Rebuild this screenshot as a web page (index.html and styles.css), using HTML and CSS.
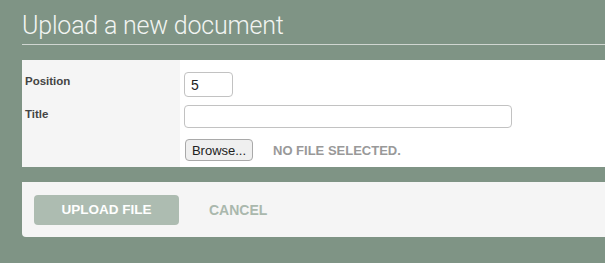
FILE: index.html
```html
<!DOCTYPE html>
<html lang="en">
<head>
    <meta charset="UTF-8">
    <title>Upload a new document</title>
    <link rel="stylesheet" href="styles.css">
</head>
<body>
    <div class="page">
        <h1>Upload a new document</h1>

        <form class="upload-form">
            <div class="fields">
                <div class="labels">
                    <label class="label">Position</label>
                    <label class="label">Title</label>
                </div>
                <div class="inputs">
                    <input type="text" class="input-position" value="5">
                    <input type="text" class="input-title">
                    <div class="file-row">
                        <button type="button" class="browse">Browse...</button>
                        <span class="file-name">No file selected.</span>
                    </div>
                </div>
            </div>

            <div class="actions">
                <button type="button" class="btn-upload">Upload file</button>
                <a class="cancel">Cancel</a>
            </div>
        </form>
    </div>
</body>
</html>
```

FILE: styles.css
```css
body {
    margin: 0;
    background: #7f9485;
    font-family: "Liberation Sans", Arial, sans-serif;
    overflow: hidden;
}
.page {
    padding: 11px 0 0 22px;
}
h1 {
    margin: 0;
    padding: 0 0 4px 0;
    font-family: Roboto, "Liberation Sans", sans-serif;
    font-weight: 300;
    font-size: 25px;
    line-height: 29px;
    color: #f2f4f2;
    border-bottom: 1px solid #d0d6d1;
    letter-spacing: -0.2px;
}
.upload-form {
    margin-top: 15px;
}
.fields {
    display: flex;
    background: #fff;
    height: 107px;
}
.labels {
    width: 158px;
    background: #f5f5f5;
    padding: 15px 0 0 3px;
    box-sizing: border-box;
}
.label {
    display: block;
    font-size: 11.5px;
    font-weight: bold;
    color: #444;
    height: 33px;
}
.inputs {
    padding: 12px 0 0 4px;
    display: flex;
    flex-direction: column;
    align-items: flex-start;
}
input[type="text"] {
    box-sizing: border-box;
    border: 1px solid #c2c2c2;
    border-radius: 4px;
    font-family: "Liberation Sans", Arial, sans-serif;
    font-size: 14px;
    padding: 2px 6px;
    background: #fff;
    color: #222;
}
.input-position {
    width: 49px;
    height: 25px;
}
.input-title {
    width: 328px;
    height: 23px;
    margin-top: 8px;
}
.file-row {
    display: flex;
    align-items: center;
    margin-top: 11px;
}
.browse {
    width: 68px;
    height: 22px;
    margin-left: 1px;
    border: 1px solid #a9a9a9;
    border-radius: 4px;
    background: #efefef;
    font-family: "Liberation Sans", Arial, sans-serif;
    font-size: 13px;
    color: #222;
    padding: 0;
}
.file-name {
    margin-left: 20px;
    font-size: 13px;
    font-weight: bold;
    text-transform: uppercase;
    color: #999;
}
.actions {
    margin-top: 15px;
    background: #f5f5f5;
    height: 55px;
    border-radius: 0 0 0 4px;
    display: flex;
    align-items: center;
    padding-left: 12px;
}
.btn-upload {
    width: 145px;
    height: 30px;
    border: none;
    border-radius: 4px;
    background: #adbcb1;
    color: #fff;
    font-family: "Liberation Sans", Arial, sans-serif;
    font-size: 13.5px;
    font-weight: bold;
    text-transform: uppercase;
    cursor: pointer;
}
.cancel {
    margin-left: 30px;
    font-size: 14px;
    font-weight: bold;
    text-transform: uppercase;
    color: #aab8ad;
    cursor: pointer;
}
```
